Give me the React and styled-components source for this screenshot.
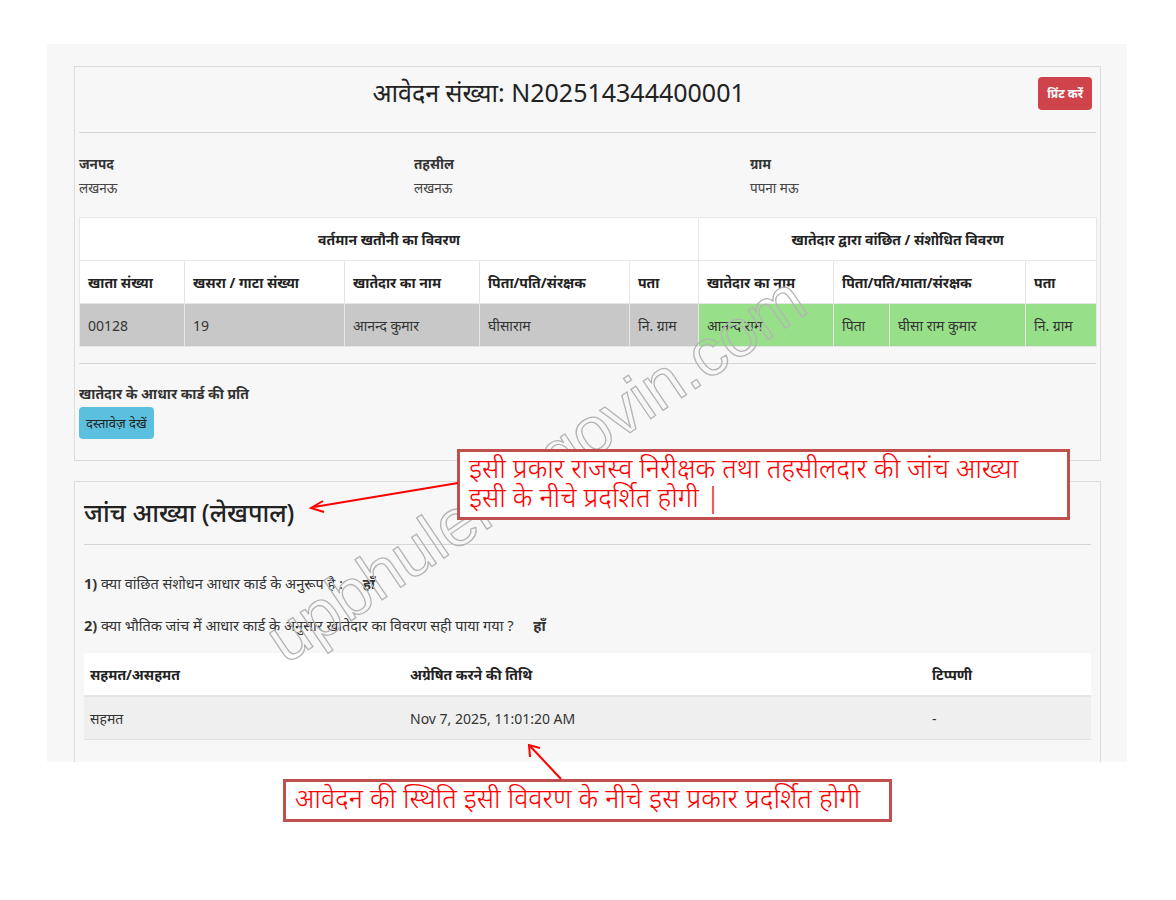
import React from "react";
import styled, { createGlobalStyle } from "styled-components";

const GlobalStyle = createGlobalStyle`
  html, body {
    margin: 0;
    padding: 0;
    background: #ffffff;
  }
  body {
    font-family: "Noto Sans", "Lohit Devanagari", "Noto Sans Devanagari", "Liberation Sans", sans-serif;
    color: #333;
  }
`;

const Page = styled.div`
  position: relative;
  width: 1176px;
  height: 900px;
  overflow: hidden;
`;

const Sheet = styled.div`
  margin: 44px 0 0 47px;
  width: 1080px;
  height: 718px;
  background: #f7f7f7;
  padding: 22px 26px 0 27px;
  box-sizing: border-box;
  overflow: hidden;
  display: flex;
  flex-direction: column;
  gap: 20px;
`;

const Card = styled.div`
  border: 1px solid #dcdcdc;
  background: #f7f7f7;
  padding: 0 4px 21px;
  flex-shrink: 0;
`;

const TitleRow = styled.div`
  display: flex;
  align-items: flex-start;
  height: 65px;
  border-bottom: 1px solid #d6d6d6;
`;

const Title = styled.h1`
  flex: 1;
  margin: 0;
  text-align: center;
  font-size: 25px;
  font-weight: 400;
  color: #222;
  padding-top: 8px;
`;

const PrintBtn = styled.button`
  margin: 10px 4px 0 0;
  background: #cf444b;
  color: #fff;
  border: none;
  border-radius: 4px;
  font-family: inherit;
  font-size: 12px;
  font-weight: 700;
  padding: 8px 9px;
`;

const InfoGrid = styled.div`
  display: grid;
  grid-template-columns: 335px 336px 1fr;
  padding: 20px 0 16px;
`;

const InfoLabel = styled.div`
  font-size: 13.5px;
  font-weight: 700;
  color: #333;
  line-height: 22px;
`;

const InfoValue = styled.div`
  font-size: 13.5px;
  color: #444;
  line-height: 26px;
`;

const Table = styled.table`
  width: 100%;
  table-layout: fixed;
  border-collapse: collapse;
  font-size: 14px;
  background: #fff;
`;

const Th = styled.th`
  border: 1px solid #e6e6e6;
  height: 42px;
  padding: 0 8px;
  text-align: ${(p) => (p.$center ? "center" : "left")};
  font-weight: 700;
  color: #222;
  white-space: nowrap;
`;

const Td = styled.td`
  border: 1px solid #e6e6e6;
  height: 42px;
  padding: 0 8px;
  background: ${(p) => (p.$green ? "#98df8a" : "#c8c8c8")};
  color: #333;
  white-space: nowrap;
`;

const Divider = styled.div`
  border-top: 1px solid #d6d6d6;
  margin-top: 16px;
`;

const DocLabel = styled.div`
  font-size: 14px;
  font-weight: 700;
  margin-top: 19px;
  line-height: 21px;
`;

const InfoBtn = styled.button`
  background: #5bc0de;
  color: #222;
  border: none;
  border-radius: 4px;
  font-family: inherit;
  font-size: 13px;
  padding: 7px 7px;
  margin-top: 3px;
`;

const Card2 = styled(Card)`
  padding: 0 9px 22px;
`;

const SectionTitle = styled.h2`
  margin: 0;
  font-size: 25px;
  font-weight: 500;
  color: #222;
  height: 62px;
  line-height: 60px;
  border-bottom: 1px solid #d6d6d6;
`;

const Question = styled.p`
  margin: 0;
  font-size: 14.5px;
  color: #333;
  line-height: 20px;
  margin-top: ${(p) => p.$top}px;

  b {
    font-weight: 700;
  }
  strong {
    margin-left: 16px;
  }
`;

const ResultTable = styled.table`
  width: 100%;
  table-layout: fixed;
  border-collapse: collapse;
  font-size: 14px;
  margin-top: 18px;
`;

const RTh = styled.th`
  background: #fff;
  text-align: left;
  padding: 0 6px;
  height: 42px;
  border-bottom: 2px solid #e6e6e6;
  color: #222;
`;

const RTd = styled.td`
  background: #efefef;
  padding: 0 6px;
  height: 42px;
  border-bottom: 1px solid #e2e2e2;
  color: #333;
`;

const Callout = styled.div`
  position: absolute;
  left: ${(p) => p.$x}px;
  top: ${(p) => p.$y}px;
  width: ${(p) => p.$w}px;
  height: ${(p) => p.$h}px;
  box-sizing: border-box;
  border: 3px solid #c0504d;
  background: #fff;
  color: #ff0000;
  font-size: 27px;
  line-height: 29px;
  padding: 1px 0 0 9px;
  font-weight: 300;
  white-space: nowrap;
  overflow: hidden;
`;

const Watermark = styled.div`
  position: absolute;
  left: 210px;
  top: 430px;
  width: 650px;
  text-align: center;
  font-family: "Liberation Sans", Arial, sans-serif;
  font-size: 67px;
  color: transparent;
  -webkit-text-stroke: 1.3px #b4b4b4;
  transform: rotate(-34deg);
  pointer-events: none;
  white-space: nowrap;
`;

const Arrows = styled.svg`
  position: absolute;
  left: 0;
  top: 0;
  pointer-events: none;
`;

const colWidths = [105, 160, 135, 150, 69, 135, 56, 136, 71];
const resultCols = [320, 522, 165];

export default function App() {
  return (
    <>
      <GlobalStyle />
      <Page>
        <Sheet>
          <Card>
            <TitleRow>
              <Title>आवेदन संख्या: N202514344400001</Title>
              <PrintBtn>प्रिंट करें</PrintBtn>
            </TitleRow>
            <InfoGrid>
              <div>
                <InfoLabel>जनपद</InfoLabel>
                <InfoValue>लखनऊ</InfoValue>
              </div>
              <div>
                <InfoLabel>तहसील</InfoLabel>
                <InfoValue>लखनऊ</InfoValue>
              </div>
              <div>
                <InfoLabel>ग्राम</InfoLabel>
                <InfoValue>पपना मऊ</InfoValue>
              </div>
            </InfoGrid>
            <Table>
              <colgroup>
                {colWidths.map((w, i) => (
                  <col key={i} style={{ width: w }} />
                ))}
              </colgroup>
              <thead>
                <tr>
                  <Th colSpan={5} $center>वर्तमान खतौनी का विवरण</Th>
                  <Th colSpan={4} $center>खातेदार द्वारा वांछित / संशोधित विवरण</Th>
                </tr>
                <tr>
                  <Th>खाता संख्या</Th>
                  <Th>खसरा / गाटा संख्या</Th>
                  <Th>खातेदार का नाम</Th>
                  <Th>पिता/पति/संरक्षक</Th>
                  <Th>पता</Th>
                  <Th>खातेदार का नाम</Th>
                  <Th colSpan={2}>पिता/पति/माता/संरक्षक</Th>
                  <Th>पता</Th>
                </tr>
              </thead>
              <tbody>
                <tr>
                  <Td>00128</Td>
                  <Td>19</Td>
                  <Td>आनन्द कुमार</Td>
                  <Td>घीसाराम</Td>
                  <Td>नि. ग्राम</Td>
                  <Td $green>आनन्द राम</Td>
                  <Td $green>पिता</Td>
                  <Td $green>घीसा राम कुमार</Td>
                  <Td $green>नि. ग्राम</Td>
                </tr>
              </tbody>
            </Table>
            <Divider />
            <DocLabel>खातेदार के आधार कार्ड की प्रति</DocLabel>
            <InfoBtn>दस्तावेज़ देखें</InfoBtn>
          </Card>

          <Card2>
            <SectionTitle>जांच आख्या (लेखपाल)</SectionTitle>
            <Question $top={28}>
              <b>1)</b> क्या वांछित संशोधन आधार कार्ड के अनुरूप है : <strong>हाँ</strong>
            </Question>
            <Question $top={22}>
              <b>2)</b> क्या भौतिक जांच में आधार कार्ड के अनुसार खातेदार का विवरण सही पाया गया ? <strong>हाँ</strong>
            </Question>
            <ResultTable>
              <colgroup>
                {resultCols.map((w, i) => (
                  <col key={i} style={{ width: w }} />
                ))}
              </colgroup>
              <thead>
                <tr>
                  <RTh>सहमत/असहमत</RTh>
                  <RTh>अग्रेषित करने की तिथि</RTh>
                  <RTh>टिप्पणी</RTh>
                </tr>
              </thead>
              <tbody>
                <tr>
                  <RTd>सहमत</RTd>
                  <RTd>Nov 7, 2025, 11:01:20 AM</RTd>
                  <RTd>-</RTd>
                </tr>
              </tbody>
            </ResultTable>
          </Card2>
        </Sheet>

        <Watermark>upbhulekh.govin.com</Watermark>

        <Callout $x={457} $y={449} $w={613} $h={71}>
          इसी प्रकार राजस्व निरीक्षक तथा तहसीलदार की जांच आख्या
          <br />
          इसी के नीचे प्रदर्शित होगी |
        </Callout>
        <Callout $x={283} $y={779} $w={609} $h={43}>
          आवेदन की स्थिति इसी विवरण के नीचे इस प्रकार प्रदर्शित होगी
        </Callout>

        <Arrows width="1176" height="900" viewBox="0 0 1176 900">
          <g stroke="#ff0000" strokeWidth="2" fill="none">
            <line x1="458" y1="483" x2="314" y2="507" />
            <polyline points="323,501 311,508 324,512" />
            <line x1="561" y1="779" x2="530" y2="746" />
            <polyline points="530,757 529,745 540,748" />
          </g>
        </Arrows>
      </Page>
    </>
  );
}
